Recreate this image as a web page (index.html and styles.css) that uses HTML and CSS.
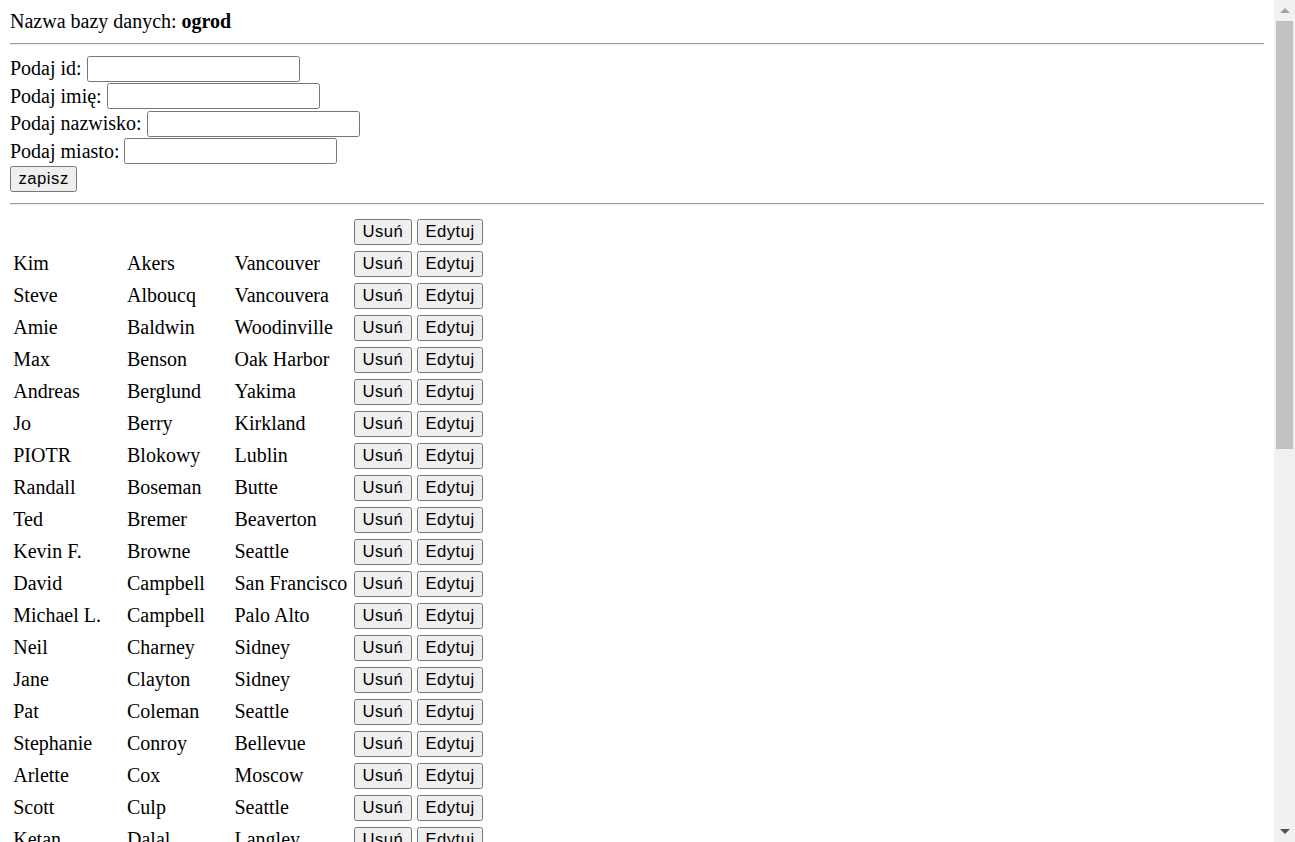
FILE: index.html
```html
<!DOCTYPE html>
<html lang="pl">
<head>
<meta charset="utf-8">
<title>ogrod</title>
<link rel="stylesheet" href="styles.css">
</head>
<body>
<div class="page">
<div class="dbname">Nazwa bazy danych: <b>ogrod</b></div>
<hr class="rule">
<form class="entry">
<div class="line">Podaj id: <input type="text" class="field"></div>
<div class="line">Podaj imię: <input type="text" class="field"></div>
<div class="line">Podaj nazwisko: <input type="text" class="field"></div>
<div class="line">Podaj miasto: <input type="text" class="field"></div>
<div class="line"><button type="button" class="btn">zapisz</button></div>
</form>
<hr class="rule">
<table class="grid">
<tbody>
<tr><td class="c1"></td><td class="c2"></td><td class="c3"></td><td class="acts"><button type="button" class="btn">Usuń</button> <button type="button" class="btn">Edytuj</button></td></tr>
<tr><td class="c1">Kim</td><td class="c2">Akers</td><td class="c3">Vancouver</td><td class="acts"><button type="button" class="btn">Usuń</button> <button type="button" class="btn">Edytuj</button></td></tr>
<tr><td class="c1">Steve</td><td class="c2">Alboucq</td><td class="c3">Vancouvera</td><td class="acts"><button type="button" class="btn">Usuń</button> <button type="button" class="btn">Edytuj</button></td></tr>
<tr><td class="c1">Amie</td><td class="c2">Baldwin</td><td class="c3">Woodinville</td><td class="acts"><button type="button" class="btn">Usuń</button> <button type="button" class="btn">Edytuj</button></td></tr>
<tr><td class="c1">Max</td><td class="c2">Benson</td><td class="c3">Oak Harbor</td><td class="acts"><button type="button" class="btn">Usuń</button> <button type="button" class="btn">Edytuj</button></td></tr>
<tr><td class="c1">Andreas</td><td class="c2">Berglund</td><td class="c3">Yakima</td><td class="acts"><button type="button" class="btn">Usuń</button> <button type="button" class="btn">Edytuj</button></td></tr>
<tr><td class="c1">Jo</td><td class="c2">Berry</td><td class="c3">Kirkland</td><td class="acts"><button type="button" class="btn">Usuń</button> <button type="button" class="btn">Edytuj</button></td></tr>
<tr><td class="c1">PIOTR</td><td class="c2">Blokowy</td><td class="c3">Lublin</td><td class="acts"><button type="button" class="btn">Usuń</button> <button type="button" class="btn">Edytuj</button></td></tr>
<tr><td class="c1">Randall</td><td class="c2">Boseman</td><td class="c3">Butte</td><td class="acts"><button type="button" class="btn">Usuń</button> <button type="button" class="btn">Edytuj</button></td></tr>
<tr><td class="c1">Ted</td><td class="c2">Bremer</td><td class="c3">Beaverton</td><td class="acts"><button type="button" class="btn">Usuń</button> <button type="button" class="btn">Edytuj</button></td></tr>
<tr><td class="c1">Kevin F.</td><td class="c2">Browne</td><td class="c3">Seattle</td><td class="acts"><button type="button" class="btn">Usuń</button> <button type="button" class="btn">Edytuj</button></td></tr>
<tr><td class="c1">David</td><td class="c2">Campbell</td><td class="c3">San Francisco</td><td class="acts"><button type="button" class="btn">Usuń</button> <button type="button" class="btn">Edytuj</button></td></tr>
<tr><td class="c1">Michael L.</td><td class="c2">Campbell</td><td class="c3">Palo Alto</td><td class="acts"><button type="button" class="btn">Usuń</button> <button type="button" class="btn">Edytuj</button></td></tr>
<tr><td class="c1">Neil</td><td class="c2">Charney</td><td class="c3">Sidney</td><td class="acts"><button type="button" class="btn">Usuń</button> <button type="button" class="btn">Edytuj</button></td></tr>
<tr><td class="c1">Jane</td><td class="c2">Clayton</td><td class="c3">Sidney</td><td class="acts"><button type="button" class="btn">Usuń</button> <button type="button" class="btn">Edytuj</button></td></tr>
<tr><td class="c1">Pat</td><td class="c2">Coleman</td><td class="c3">Seattle</td><td class="acts"><button type="button" class="btn">Usuń</button> <button type="button" class="btn">Edytuj</button></td></tr>
<tr><td class="c1">Stephanie</td><td class="c2">Conroy</td><td class="c3">Bellevue</td><td class="acts"><button type="button" class="btn">Usuń</button> <button type="button" class="btn">Edytuj</button></td></tr>
<tr><td class="c1">Arlette</td><td class="c2">Cox</td><td class="c3">Moscow</td><td class="acts"><button type="button" class="btn">Usuń</button> <button type="button" class="btn">Edytuj</button></td></tr>
<tr><td class="c1">Scott</td><td class="c2">Culp</td><td class="c3">Seattle</td><td class="acts"><button type="button" class="btn">Usuń</button> <button type="button" class="btn">Edytuj</button></td></tr>
<tr><td class="c1">Ketan</td><td class="c2">Dalal</td><td class="c3">Langley</td><td class="acts"><button type="button" class="btn">Usuń</button> <button type="button" class="btn">Edytuj</button></td></tr>
<tr><td class="c1">Mike</td><td class="c2">Danseglio</td><td class="c3">Redmond</td><td class="acts"><button type="button" class="btn">Usuń</button> <button type="button" class="btn">Edytuj</button></td></tr>
<tr><td class="c1">Bryan</td><td class="c2">Davis</td><td class="c3">Seattle</td><td class="acts"><button type="button" class="btn">Usuń</button> <button type="button" class="btn">Edytuj</button></td></tr>
</tbody>
</table>
</div>
<div class="vscroll" aria-hidden="true">
<div class="vs-btn vs-up"><span class="tri tri-up"></span></div>
<div class="vs-track"><div class="vs-thumb"></div></div>
<div class="vs-btn vs-down"><span class="tri tri-down"></span></div>
</div>
</body>
</html>
```
FILE: styles.css
```css
html,
body {
  margin: 0;
  height: 100%;
  overflow: hidden;
  background: #ffffff;
}

body {
  display: flex;
  font-family: "Liberation Serif", "Times New Roman", serif;
  font-size: 20px;
  color: #000000;
}

.page {
  flex: 1;
  min-width: 0;
  height: 100vh;
  box-sizing: border-box;
  overflow: hidden;
  padding: 10px;
}

.dbname {
  line-height: 23px;
}

.rule {
  margin: 10px 0;
  height: 0;
  border: 0;
  border-top: 1.5px solid #9a9a9a;
  border-bottom: 1px solid #eeeeee;
}

.entry {
  margin: 0;
}

.line {
  line-height: 23px;
  height: 27.5px;
  display: flex;
  align-items: center;
  white-space: pre;
}

.field {
  box-sizing: border-box;
  width: 213px;
  height: 26.25px;
  margin: 0;
  padding: 1px 2.5px;
  border: 1.25px solid #767676;
  border-radius: 2.5px;
  font-family: "Liberation Sans", Arial, sans-serif;
  font-size: 16.67px;
  background: #ffffff;
}

.btn {
  box-sizing: border-box;
  height: 26px;
  margin: 0;
  padding: 0 7.5px;
  border: 1.25px solid #767676;
  border-radius: 2.5px;
  background: #efefef;
  color: #000000;
  font-family: "Liberation Sans", Arial, sans-serif;
  font-size: 16.67px;
  letter-spacing: 0.5px;
  line-height: 22px;
  vertical-align: middle;
}

.grid {
  border-collapse: separate;
  border-spacing: 2.5px;
  margin: 3.5px 0 0;
}

.grid td {
  padding: 1.25px;
  height: 27.5px;
  vertical-align: middle;
  white-space: nowrap;
  line-height: 23px;
}

.grid .c1 {
  width: 109.25px;
}

.grid .c2 {
  width: 103px;
}

.grid .c3 {
  width: 115px;
}

.vscroll {
  flex: 0 0 21px;
  height: 100vh;
  display: flex;
  flex-direction: column;
  background: #f1f1f1;
}

.vs-btn {
  flex: 0 0 21px;
  display: flex;
  align-items: center;
  justify-content: center;
}

.tri {
  width: 0;
  height: 0;
  border-left: 5px solid transparent;
  border-right: 5px solid transparent;
}

.tri-up {
  border-bottom: 5px solid #a3a3a3;
}

.tri-down {
  border-top: 5px solid #505050;
}

.vs-track {
  flex: 1;
  padding: 0 2px;
}

.vs-thumb {
  height: 428px;
  background: #c1c1c1;
}
```
